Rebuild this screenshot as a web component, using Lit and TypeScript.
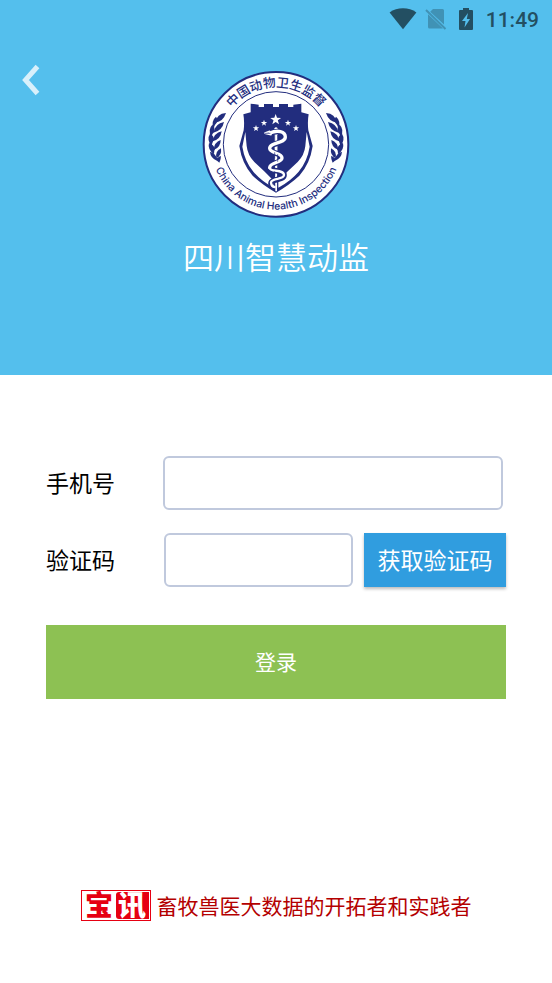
import { LitElement, html, css, svg } from "lit";
import { customElement } from "lit/decorators.js";

const STAR = "M0 -10 L2.4 -3.2 9.5 -3.1 3.8 1.2 5.9 8.1 0 4 -5.9 8.1 -3.8 1.2 -9.5 -3.1 -2.4 -3.2Z";

@customElement("status-bar")
class StatusBar extends LitElement {
  static styles = css`
    :host {
      display: flex;
      align-items: center;
      justify-content: flex-end;
      height: 38px;
      padding-right: 13px;
      color: #234f62;
      font: 500 21px/36px Roboto, sans-serif;
    }
    .wifi { width: 28px; height: 22px; margin-right: 8px; }
    .sim { width: 22px; height: 22px; margin-right: 11px; }
    .battery { width: 16px; height: 24px; margin-right: 12px; }
    .clock { padding-top: 2px; }
  `;

  render() {
    return html`
      <svg class="wifi" viewBox="0 0 28 22" aria-hidden="true">
        <path fill="currentColor" d="M0.6 4.4C8 -1.2 20 -1.2 27.4 4.4L14 21.2Z" />
      </svg>
      <svg class="sim" viewBox="0 0 22 22" aria-hidden="true">
        <path fill="#4092b5" d="M8 1H17.500Q19 1 19 2.500V16.600L5.200 3.800ZM3 6.200L18 20.500H4.500Q3 20.500 3 19Z" />
        <path stroke="#4092b5" stroke-width="2" d="M1 2L20.500 21" />
      </svg>
      <svg class="battery" viewBox="0 0 16 24" aria-hidden="true">
        <path fill="currentColor" d="M5 1h6v2h3q1 0 1 1v18q0 1 -1 1H2q-1 0 -1 -1V4q0 -1 1 -1h3Z" />
        <path fill="#54bfed" d="M10 6L4 14h3.500L6.500 20.500 12 12H8.800Z" />
      </svg>
      <span class="clock">11:49</span>
    `;
  }
}

@customElement("agency-emblem")
class AgencyEmblem extends LitElement {
  static styles = css`
    :host { display: block; width: 160px; height: 160px; }
    svg { display: block; width: 100%; height: 100%; }
    .zh { font: 500 38px "Noto Sans CJK SC", sans-serif; }
    .en { font: 500 31px Inter, "Liberation Sans", sans-serif; }
  `;

  private laurel() {
    return svg`
      <path d="M90 147Q62 149 58 176Q82 172 90 147Z" />
      <path d="M60 158Q45 170 52 194Q57 180 62 176Q67 166 60 158Z" />
      <path d="M84 174Q58 178 52 206Q79 200 84 174Z" />
      <path d="M49 182Q34 197 46 220Q49 207 55 203Q58 190 49 182Z" />
      <path d="M77 202Q54 207 50 232Q74 226 77 202Z" />
      <path d="M42 209Q31 226 47 247Q49 233 54 229Q55 216 42 209Z" />
      <path d="M74 228Q54 235 53 258Q74 251 74 228Z" />
      <path d="M39 237Q34 256 54 271Q54 259 57 255Q53 242 39 237Z" />
      <path d="M75 253Q57 261 61 283Q78 274 75 253Z" />
      <path d="M42 263Q43 282 64 291L70 296Q76 282 74 275L63 283Q58 268 42 263Z" />
    `;
  }

  render() {
    return html`
      <svg viewBox="0 0 480 480" role="img" aria-label="中国动物卫生监督">
        <defs>
          <path id="upper" d="M68 241A172 172 0 0 1 412 241" />
          <path id="lower" d="M44 241A196 196 0 0 0 436 241" />
        </defs>
        <circle cx="240" cy="241" r="217" fill="#fff" stroke="#222d7e" stroke-width="6" />
        <circle cx="240" cy="241" r="158" fill="none" stroke="#222d7e" stroke-width="3" />
        <g fill="#222d7e">
          <text class="zh" text-anchor="middle"><textPath href="#upper" startOffset="50%">中国动物卫生监督</textPath></text>
          <text class="en" text-anchor="middle"><textPath href="#lower" startOffset="50%">China Animal Health Inspection</textPath></text>
          <g>${this.laurel()}</g>
          <g transform="translate(480 0) scale(-1 1)">${this.laurel()}</g>
          <path d="M164 119L188 122V129H204V120H231V129H249V120H276V129H292V122L316 119V145L338 151Q334 172 337 199L350 246Q342 300 310 335Q281 362 240 386Q199 362 170 335Q138 300 130 246L143 199Q146 172 142 151L164 145Z" />
        </g>
        <g fill="#fff">
          <path d="M148 204L152 246Q155 274 175 294Q206 322 233 350V371Q196 351 172 323Q146 292 139 248Z" />
          <path d="M332 204L328 246Q325 274 305 294Q274 322 247 350V371Q284 351 308 323Q334 292 341 248Z" />
          <path transform="translate(239 167) scale(1.700)" d=${STAR} />
          <path transform="translate(204 177)" d=${STAR} />
          <path transform="translate(276 177)" d=${STAR} />
          <path transform="translate(180 193)" d=${STAR} />
          <path transform="translate(300 193)" d=${STAR} />
          <path d="M235 193Q240 187 245 193L243 382H238Z" />
        </g>
        <g fill="none" stroke-linecap="round">
          <path stroke="#222d7e" stroke-width="17" d="M222 208C244 198 270 202 270 220C270 241 221 234 221 253C221 272 258 264 258 282C258 299 221 294 221 311C221 326 264 314 264 333C264 350 226 343 225 358" />
          <path stroke="#fff" stroke-width="10" d="M222 207C244 197 268 202 268 219C268 239 221 234 221 253C221 270 258 264 258 282C258 297 221 294 221 311" />
          <path stroke="#fff" stroke-width="7" d="M221 311C221 326 264 314 264 333C264 347 227 342 225 355Q226 368 236 369" />
          <path stroke="#fff" stroke-width="5" d="M207 207L221 202M209 208L225 212" />
          <path stroke="#222d7e" stroke-width="2" d="M208 208L222 208M236 214V230M245 214V227M236 266V282M245 272V292M236 323V335M245 326V339" />
        </g>
      </svg>
    `;
  }
}

@customElement("app-root")
class AppRoot extends LitElement {
  static styles = css`
    :host {
      display: block;
      min-height: 100vh;
      background: #fff;
      color: #000;
      font-family: "Noto Sans CJK SC", sans-serif;
    }
    * { box-sizing: border-box; }
    .hero { min-height: 375px; background: #54bfed; }
    .brand {
      display: grid;
      grid-template-columns: 60px 1fr 60px;
      padding-top: 26px;
    }
    .back {
      width: 60px;
      height: 32px;
      padding: 0 0 0 22px;
      border: 0;
      background: none;
    }
    .back svg { display: block; width: 18px; height: 32px; }
    .identity { display: flex; flex-direction: column; align-items: center; }
    h1 {
      margin: 10px 0 0;
      color: #fff;
      font-size: 31px;
      font-weight: 350;
      line-height: 44px;
    }
    form { padding: 81px 46px 0; }
    .row {
      display: flex;
      align-items: center;
      margin-bottom: 23px;
      font-size: 23px;
    }
    label { flex: 0 0 117px; padding-bottom: 2px; }
    input {
      flex: 1;
      min-width: 0;
      height: 54px;
      padding: 0 12px;
      border: 2px solid #c0c9dd;
      border-radius: 6px;
      background: #fff;
      font: inherit;
    }
    .phone { margin-right: 3px; }
    .code { margin: 0 11px 0 1px; }
    button { padding: 0 0 2px; font-family: inherit; cursor: pointer; }
    .send {
      flex: 0 0 142px;
      height: 54px;
      border: 0;
      background: #309ddf;
      box-shadow: 0 2px 3px #0004;
      color: #fff;
      font-size: 23px;
    }
    .login {
      display: block;
      width: 100%;
      height: 74px;
      margin-top: 38px;
      border: 0;
      background: #8dc153;
      color: #fff;
      font-size: 21px;
    }
    footer {
      display: flex;
      align-items: center;
      justify-content: center;
      gap: 6px;
      padding: 190px 0 60px;
      color: #b40000;
      font-size: 21px;
      line-height: 32px;
    }
    .badge {
      display: flex;
      width: 70px;
      height: 31px;
      padding: 1px;
      border: 1px solid #e60012;
      background: #fff;
      color: #e60012;
      font-size: 28px;
      font-weight: 900;
      line-height: 24px;
      text-align: center;
    }
    .badge span { flex: 1; }
    .badge .solid { border-radius: 3px 0 0 3px; background: #e60012; color: #fff; }
  `;

  render() {
    return html`
      <header class="hero">
        <status-bar></status-bar>
        <div class="brand">
          <button class="back" type="button" aria-label="返回">
            <svg viewBox="0 0 18 32" fill="none" stroke="#d8f0fb" stroke-width="5">
              <path d="M15.500 2.500L3.500 16L15.500 29.500" />
            </svg>
          </button>
          <div class="identity">
            <agency-emblem></agency-emblem>
            <h1>四川智慧动监</h1>
          </div>
        </div>
      </header>
      <form @submit=${(e: Event) => e.preventDefault()}>
        <div class="row">
          <label for="phone">手机号</label>
          <input class="phone" id="phone" type="tel" />
        </div>
        <div class="row">
          <label for="code">验证码</label>
          <input class="code" id="code" type="text" inputmode="numeric" />
          <button class="send" type="button">获取验证码</button>
        </div>
        <button class="login" type="submit">登录</button>
      </form>
      <footer>
        <div class="badge"><span>宝</span><span class="solid">讯</span></div>
        <span>畜牧兽医大数据的开拓者和实践者</span>
      </footer>
    `;
  }
}
